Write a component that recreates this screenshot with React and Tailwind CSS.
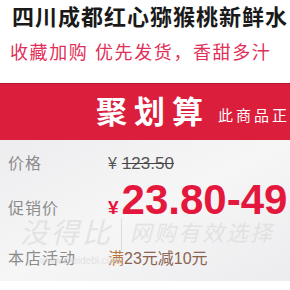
const CJK = "font-['Liberation_Sans','Noto_Sans_CJK_SC',sans-serif]";

function PriceRow({ label, children, className = "" }) {
  return (
    <div className={`flex items-baseline ${className}`}>
      <span className="w-[100px] shrink-0 text-[16px] leading-[20px] tracking-[1px] text-[#8c8c8c]">{label}</span>
      <div className="flex items-baseline whitespace-nowrap">{children}</div>
    </div>
  );
}

export default function App() {
  return (
    <div className={`relative h-[290px] w-[290px] overflow-hidden bg-white ${CJK}`}>
      <h1 className="whitespace-nowrap pl-[12px] pt-[5px] text-[22px] font-bold leading-[26px] tracking-[1px] text-[#1a1a1a]">
        四川成都红心猕猴桃新鲜水
      </h1>
      <p className="mt-[11px] whitespace-nowrap pl-[10px] text-[18px] leading-[22px] tracking-[1.6px] text-[#e0305a]">
        收藏加购 优先发货，香甜多汁
      </p>

      <div className="mt-[19px] flex h-[57px] items-center whitespace-nowrap border-t border-[#b5182f] bg-[#da1e3c] pl-[96px]">
        <span className="text-[31px] font-bold leading-none tracking-[7px] text-white">聚划算</span>
        <span className="ml-[8px] mt-[6px] text-[15px] leading-none tracking-[3px] text-white">此商品正</span>
      </div>

      <section className="h-[141px] bg-gradient-to-br from-[#ededef] via-[#f6f6f7] to-[#ececee] pl-[8px] pt-[14px]">
        <PriceRow label="价格">
          <span className="text-[16px] leading-[20px] text-[#555]">¥</span>
          <span className="ml-[5px] text-[17px] leading-[20px] text-[#555] line-through decoration-[#444]">123.50</span>
        </PriceRow>
        <PriceRow label="促销价" className="mt-[3px]">
          <span className="text-[19px] font-bold text-[#e4173d]">¥</span>
          <span className="ml-[3px] text-[42px] font-bold leading-[46px] text-[#e4173d]">23.80-49</span>
        </PriceRow>
        <PriceRow label="本店活动" className="mt-[26px]">
          <span className="text-[16px] leading-[20px] text-[#b8733f]">满</span>
          <span className="text-[16px] leading-[20px] text-[#8a6450]">23元减10元</span>
        </PriceRow>
      </section>

      <div className="pointer-events-none absolute left-[20px] top-[218px] flex items-center whitespace-nowrap text-[#dcdcdc] opacity-70">
        <span className="text-[28px] italic leading-[32px] tracking-[3px]">没得比</span>
        <span className="mx-[8px] h-[32px] w-px bg-[#d4d4d4]" />
        <span className="text-[22px] italic leading-[32px] tracking-[2px]">网购有效选择</span>
      </div>
      <span className="pointer-events-none absolute left-[40px] top-[253px] text-[10px] text-[#dadada] opacity-70">www.meidebi.com</span>
    </div>
  );
}
